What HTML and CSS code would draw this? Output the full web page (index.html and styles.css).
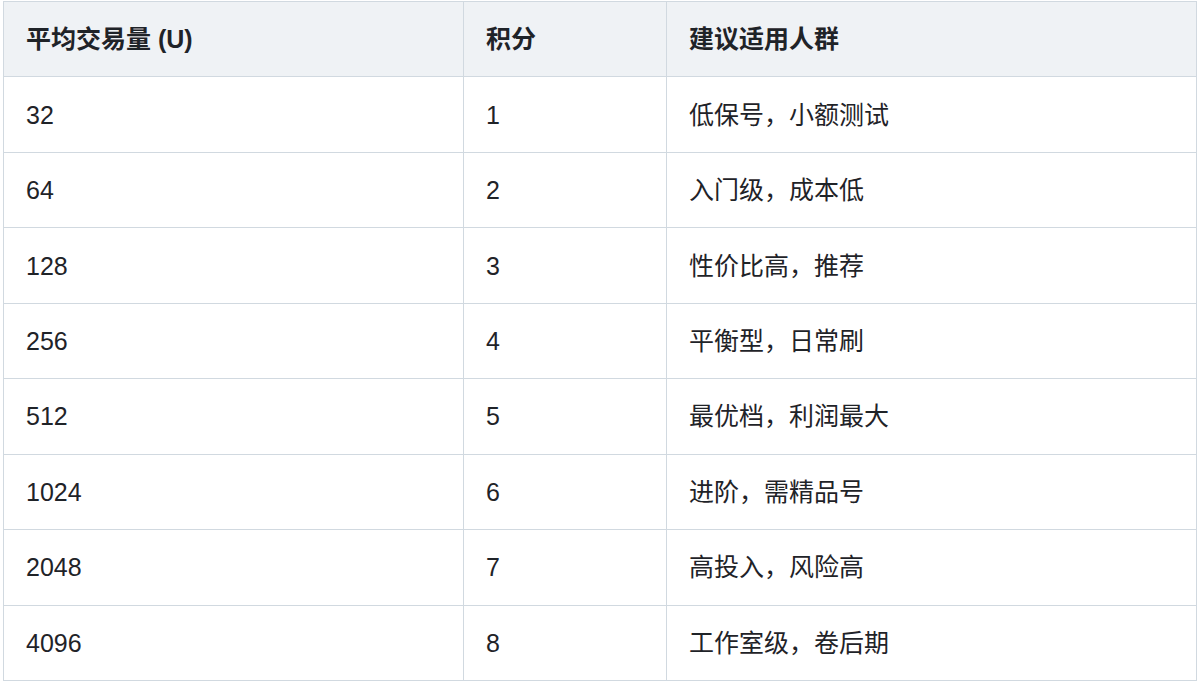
FILE: index.html
```html
<!DOCTYPE html>
<html lang="zh">
<head>
<meta charset="utf-8">
<link rel="stylesheet" href="styles.css">
</head>
<body>
<div class="wrap">
<table class="tbl">
  <colgroup>
    <col class="c1"><col class="c2"><col class="c3">
  </colgroup>
  <thead>
    <tr><th>平均交易量 (U)</th><th>积分</th><th>建议适用人群</th></tr>
  </thead>
  <tbody>
    <tr><td>32</td><td>1</td><td>低保号，小额测试</td></tr>
    <tr><td>64</td><td>2</td><td>入门级，成本低</td></tr>
    <tr><td>128</td><td>3</td><td>性价比高，推荐</td></tr>
    <tr><td>256</td><td>4</td><td>平衡型，日常刷</td></tr>
    <tr><td>512</td><td>5</td><td>最优档，利润最大</td></tr>
    <tr><td>1024</td><td>6</td><td>进阶，需精品号</td></tr>
    <tr><td>2048</td><td>7</td><td>高投入，风险高</td></tr>
    <tr><td>4096</td><td>8</td><td>工作室级，卷后期</td></tr>
  </tbody>
</table>
</div>
</body>
</html>
```
FILE: styles.css
```css
html, body {
  margin: 0;
  padding: 0;
  background: #ffffff;
}
.wrap {
  padding: 1px 0 0 3px;
}
.tbl {
  border-collapse: collapse;
  width: 1193px;
  table-layout: fixed;
  font-family: "Liberation Sans", "Noto Sans CJK SC", sans-serif;
  font-size: 25px;
  color: #1f2328;
}
.c1 { width: 460px; }
.c2 { width: 203px; }
.c3 { width: 530px; }
.tbl th, .tbl td {
  border: 1px solid #d1d9e0;
  padding: 0 22px;
  height: 75.44px;
  box-sizing: border-box;
  text-align: left;
  vertical-align: middle;
  line-height: 30px;
}
.tbl th {
  background: #eff2f5;
  font-weight: 700;
}
.tbl td {
  font-weight: 400;
}
```
